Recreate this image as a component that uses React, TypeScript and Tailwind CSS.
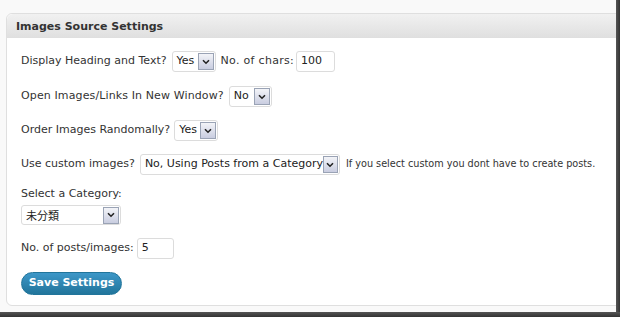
import React from "react";

type FakeSelectProps = {
  value: string;
  width: string;
  height?: string;
  cjk?: boolean;
};

function Chevron() {
  return (
    <svg width="8" height="6" viewBox="0 0 8 6" className="text-[#222]">
      <path d="M1 1.2 L4 4.2 L7 1.2" fill="none" stroke="currentColor" strokeWidth="1.6" />
    </svg>
  );
}

function FakeSelect({ value, width, height = "h-[21px]", cjk }: FakeSelectProps) {
  return (
    <div
      className={`flex items-center justify-between rounded-[3px] border border-[#dcdcdc] bg-white pl-[4px] pr-[1px] ${height} ${width}`}
    >
      <span
        className={`whitespace-nowrap text-[#222] ${
          cjk ? "font-['Noto_Sans_CJK_JP',sans-serif] text-[11px]" : "text-[11px]"
        }`}
      >
        {value}
      </span>
      <div className="flex h-[17px] w-[16px] items-center justify-center border border-[#9aa3b5] bg-gradient-to-b from-[#f3f4f8] to-[#c9cde0]">
        <Chevron />
      </div>
    </div>
  );
}

function TextBox({ value, width }: { value: string; width: string }) {
  return (
    <div
      className={`flex h-[21px] items-center rounded-[3px] border border-[#dcdcdc] bg-white px-[4px] text-[11px] text-[#222] ${width}`}
    >
      {value}
    </div>
  );
}

export default function App() {
  return (
    <div className="relative h-[317px] w-[620px] overflow-hidden bg-[#f9f9f9] font-['DejaVu_Sans',Verdana,sans-serif] text-[11px] text-[#333]">
      <div className="ml-[6px] mt-[13px] h-[293px] w-[620px] rounded-tl-[6px] rounded-bl-[6px] border border-[#dfdfdf] bg-white">
        <div className="flex h-[24px] items-center rounded-tl-[6px] border-b border-[#dfdfdf] bg-gradient-to-b from-[#f1f1f1] to-[#e0e0e0] pl-[9px] pt-[3px] text-[11px] font-bold text-[#333]">
          Images Source Settings
        </div>

        <div className="flex flex-col pl-[14px] pt-[13px]">
          <div className="flex h-[21px] items-center">
            <span>Display Heading and Text?</span>
            <div className="ml-[5px]">
              <FakeSelect value="Yes" width="w-[44px]" />
            </div>
            <span className="ml-[5px] tracking-[0.3px]">No. of chars:</span>
            <div className="ml-[2px]">
              <TextBox value="100" width="w-[39px]" />
            </div>
          </div>

          <div className="mt-[14px] flex h-[21px] items-center">
            <span className="tracking-[0.12px]">Open Images/Links In New Window?</span>
            <div className="ml-[5px]">
              <FakeSelect value="No" width="w-[43px]" />
            </div>
          </div>

          <div className="mt-[13px] flex h-[21px] items-center">
            <span>Order Images Randomally?</span>
            <div className="ml-[4px]">
              <FakeSelect value="Yes" width="w-[44px]" />
            </div>
          </div>

          <div className="mt-[13px] flex h-[21px] items-center">
            <span>Use custom images?</span>
            <div className="ml-[5px]">
              <FakeSelect value="No, Using Posts from a Category" width="w-[200px]" />
            </div>
            <span className="ml-[6px] text-[9.7px] text-[#333]">
              If you select custom you dont have to create posts.
            </span>
          </div>

          <div className="mt-[12px] leading-[14px]">Select a Category:</div>
          <div className="mt-[4px]">
            <FakeSelect value="未分類" width="w-[100px]" height="h-[20px]" cjk />
          </div>

          <div className="mt-[13px] flex h-[21px] items-center">
            <span>No. of posts/images:</span>
            <div className="ml-[3px]">
              <TextBox value="5" width="w-[37px]" />
            </div>
          </div>

          <div className="mt-[13px]">
            <button
              type="button"
              className="h-[23px] w-[101px] rounded-full border border-[#21759b] bg-gradient-to-b from-[#3d97c8] to-[#21759b] text-[11px] font-bold text-white"
            >
              Save Settings
            </button>
          </div>
        </div>
      </div>

      <div className="absolute right-0 top-0 h-full w-[4px] bg-gradient-to-r from-[#555] to-[#333]" />
      <div className="absolute bottom-0 left-0 h-[5px] w-full bg-gradient-to-b from-[#555] to-[#333]" />
    </div>
  );
}
